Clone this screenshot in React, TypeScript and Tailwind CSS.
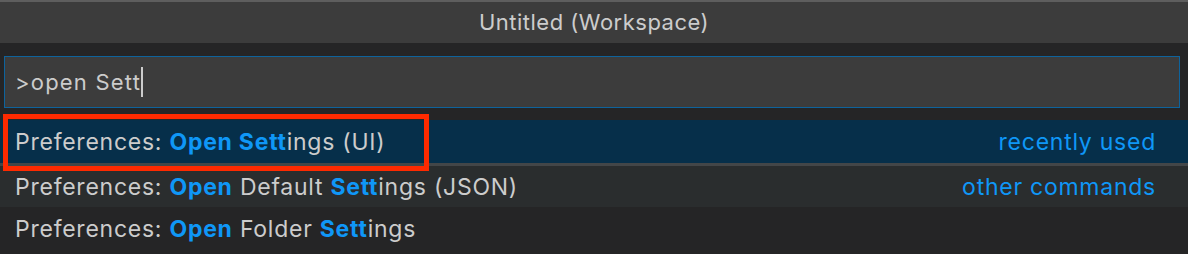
import React from "react";

const H = ({ children }: { children: React.ReactNode }) => (
  <span className="font-bold text-[#0f97f7]">{children}</span>
);

export default function App() {
  return (
    <div
      className="w-[1188px] h-[254px] bg-[#252526] text-[#cccccc] overflow-hidden"
      style={{ fontFamily: "Inter, 'Open Sans', sans-serif" }}
    >
      <div className="h-[43px] bg-[#3c3c3c] border-t-2 border-[#5e5e5e] flex items-center justify-center text-[22px] tracking-[0.5px] text-[#cccccc]">
        Untitled (Workspace)
      </div>
      <div className="pt-[13px] px-[4px]">
        <div className="h-[52px] w-[1176px] border-[1.5px] border-[#0e639c] bg-[#3c3c3c] flex items-center pl-[10px] text-[22px] tracking-[1.2px]">
          <span>&gt;open Sett</span>
          <span className="w-[1.5px] h-[30px] bg-[#cccccc]" />
        </div>
      </div>
      <div className="mt-[12px] text-[23px] tracking-[0.75px]">
        <div className="relative h-[46px] bg-[#062f4a] flex items-center justify-between pl-[15px] pr-[32px] pt-[2px] border-b-[3px] border-[#434648]">
          <span>
            Preferences: <H>Open Sett</H>ings (UI)
          </span>
          <span className="text-[#0f97f7]">recently used</span>
          <div className="absolute left-[3px] top-[-6px] w-[426px] h-[57px] border-[5px] border-[#ff2a00]" />
        </div>
        <div className="h-[41px] bg-[#2a2d2e] flex items-center justify-between pl-[15px] pr-[32px] pt-[2px]">
          <span>
            Preferences: <H>Open</H> Default <H>Sett</H>ings (JSON)
          </span>
          <span className="text-[#0f97f7]">other commands</span>
        </div>
        <div className="h-[43px] flex items-center pl-[15px] pt-[2px]">
          <span>
            Preferences: <H>Open</H> Folder <H>Sett</H>ings
          </span>
        </div>
      </div>
    </div>
  );
}
